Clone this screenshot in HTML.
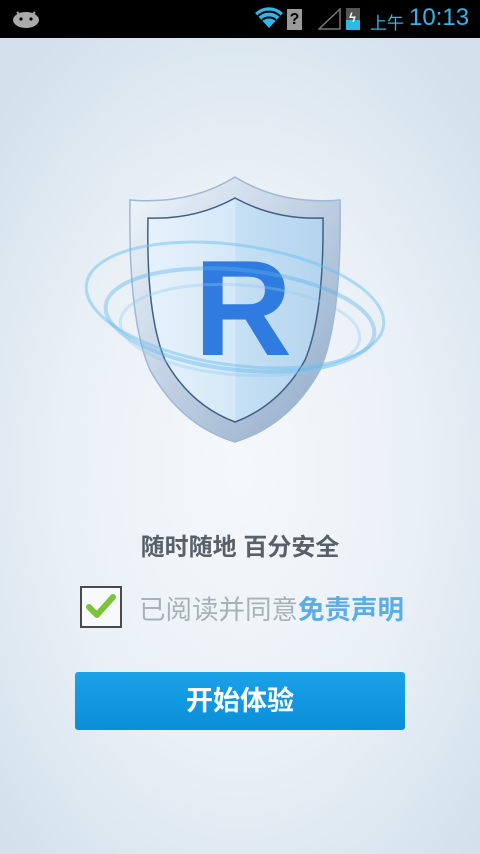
<!DOCTYPE html>
<html><head><meta charset="utf-8"><style>
body{margin:0;width:480px;height:854px;overflow:hidden;font-family:"Liberation Sans","Noto Sans CJK SC",sans-serif;background:radial-gradient(ellipse 330px 520px at 240px 470px,#f5f8fb 0%,#e9f0f6 55%,#d3e1ec 100%);position:relative}
.sb{position:absolute;left:0;top:0;width:480px;height:38px;background:#000}
.abs{position:absolute}
</style></head><body>
<div class="sb">
<svg class="abs" style="left:12px;top:8px" width="30" height="20"><ellipse cx="14" cy="12" rx="13" ry="8" fill="#aaa"/><circle cx="9" cy="11" r="1.6" fill="#000"/><circle cx="19" cy="11" r="1.6" fill="#000"/><line x1="5" y1="4" x2="8" y2="7" stroke="#aaa" stroke-width="2"/><line x1="23" y1="4" x2="20" y2="7" stroke="#aaa" stroke-width="2"/></svg>
<svg class="abs" style="left:254px;top:6px" width="32" height="24"><path d="M15 22 L1 7 A20 20 0 0 1 29 7 Z" fill="#33b5e5"/><path d="M4 10 A16 16 0 0 1 26 10" stroke="#000" stroke-width="2" fill="none"/><path d="M8 14 A11 11 0 0 1 22 14" stroke="#000" stroke-width="2" fill="none"/></svg>
<div class="abs" style="left:287px;top:9px;width:15px;height:21px;background:#9a9a9a;color:#000;font:bold 16px/21px 'Liberation Sans';text-align:center">?</div>
<svg class="abs" style="left:318px;top:8px" width="24" height="22"><path d="M1 21 L22 21 L22 1 Z" fill="none" stroke="#777" stroke-width="1.5"/></svg>
<div class="abs" style="left:346px;top:8px;width:14px;height:22px;background:#555"><div style="position:absolute;bottom:0;width:14px;height:10px;background:#33b5e5"></div><div style="position:absolute;left:3px;top:3px;color:#fff;font:bold 13px/14px sans-serif">ϟ</div></div>
<div class="abs" style="left:370px;top:9px;color:#33b5e5;font-size:17px">上午</div>
<div class="abs" style="left:409px;top:4px;color:#33b5e5;font-size:24px">10:13</div>
</div>
<svg class="abs" style="left:80px;top:170px" width="320" height="280">
<defs>
<linearGradient id="rim" x1="0" y1="0" x2="1" y2="1"><stop offset="0" stop-color="#f0f6fc"/><stop offset="1" stop-color="#8ea9c8"/></linearGradient>
<linearGradient id="face" x1="0" y1="0" x2="1" y2="0"><stop offset="0" stop-color="#e6f2fb"/><stop offset="0.5" stop-color="#d4e8f7"/><stop offset="0.5" stop-color="#c6e0f4"/><stop offset="1" stop-color="#b4d4ee"/></linearGradient>
</defs>
<path d="M155 7 Q200 35 260 30 Q262 150 240 200 Q210 255 155 272 Q100 255 70 200 Q48 150 50 30 Q110 35 155 7Z" fill="url(#rim)" stroke="#9fb8d3" stroke-width="1.5"/>
<path d="M155 28 Q195 50 243 48 Q244 145 225 190 Q200 235 155 252 Q110 235 85 190 Q66 145 68 48 Q115 50 155 28Z" fill="url(#face)" stroke="#3f5f85" stroke-width="1.5"/>
<text x="163" y="185" text-anchor="middle" font-family="Liberation Sans" font-weight="bold" font-size="136" fill="#2f7be0">R</text>
<ellipse cx="155" cy="135" rx="150" ry="60" fill="none" stroke="#6fc0f0" stroke-width="3" opacity=".5" transform="rotate(8 155 135)"/>
<ellipse cx="160" cy="150" rx="135" ry="50" fill="none" stroke="#5ab5ee" stroke-width="4" opacity=".4" transform="rotate(6 160 150)"/>
<ellipse cx="160" cy="160" rx="120" ry="45" fill="none" stroke="#8ccbf2" stroke-width="3" opacity=".35" transform="rotate(4 160 160)"/>
</svg>
<div class="abs" style="left:0;width:480px;top:527px;text-align:center;font-size:24px;font-weight:bold;color:#5a6068">随时随地 百分安全</div>
<div class="abs" style="left:80px;top:586px;width:38px;height:38px;border:2px solid #4a4a4a;background:#f8f9fa"></div>
<svg class="abs" style="left:86px;top:592px" width="30" height="28"><path d="M3 15 L11 23 L27 5" fill="none" stroke="#7cc33a" stroke-width="6" stroke-linecap="round" stroke-linejoin="round"/></svg>
<div class="abs" style="left:139px;top:588px;font-size:26.5px;color:#a8b0b8">已阅读并同意<span style="color:#5aaee8;font-weight:bold">免责声明</span></div>
<div class="abs" style="left:75px;top:672px;width:330px;height:58px;border-radius:3px;background:linear-gradient(#1aa2e8,#0a8ed8);color:#fff;font-size:27px;font-weight:bold;text-align:center;line-height:58px">开始体验</div>
</body></html>
